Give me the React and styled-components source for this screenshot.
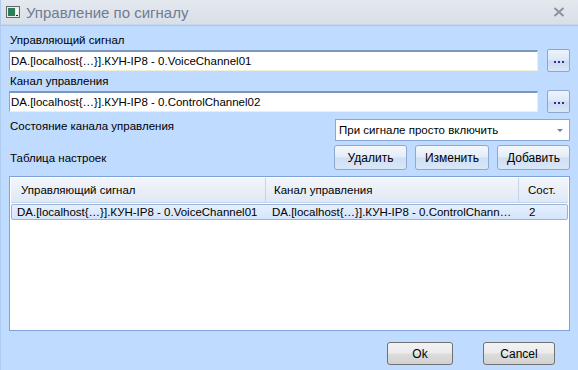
import React from 'react'
import styled, { createGlobalStyle } from 'styled-components'

const SIGNAL = 'DA.[localhost{…}].КУН-IP8 - 0.VoiceChannel01'
const CONTROL = 'DA.[localhost{…}].КУН-IP8 - 0.ControlChannel02'

const Global = createGlobalStyle`
  html, body { margin: 0; padding: 0; }
  body {
    width: 578px;
    height: 370px;
    overflow: hidden;
    font-family: "Liberation Sans", Arial, sans-serif;
    font-size: 11px;
    color: #000;
  }
`

const Window = styled.div`
  width: 578px;
  height: 370px;
  display: flex;
  flex-direction: column;
  background: #bfdbff;
  box-sizing: border-box;
  border-left: 1px solid #aecbf0;
`

const TitleBar = styled.div`
  height: 24px;
  display: flex;
  align-items: center;
  padding: 0 5px;
  background: linear-gradient(#e4e8ef, #d9dfe8);
  border-bottom: 1px solid #c9d7ea;
  box-shadow: 0 1px 0 #a9c6ee;
`

const Title = styled.div`
  flex: 1;
  margin-left: 6px;
  font-size: 15px;
  color: #6f7c90;
`

const Body = styled.div`
  flex: 1;
  display: flex;
  flex-direction: column;
  padding: 7px 8px 0 8px;
`

const Label = styled.div`
  height: 16px;
  line-height: 16px;
  padding-left: 1px;
  font-size: 11.5px;
  margin-top: ${p => p.$mt || 0}px;
`

const FieldRow = styled.div`
  display: grid;
  grid-template-columns: 1fr 23px;
  gap: 9px;
  align-items: center;
  margin-top: ${p => p.$mt || 0}px;
`

const Input = styled.div`
  height: 21px;
  box-sizing: border-box;
  background: #fff;
  border: 1px solid;
  border-top-width: 2px;
  border-color: #7c97bd #f3eedc #f3eedc #8ea7c8;
  line-height: 18px;
  padding-left: 1px;
  font-size: 11.5px;
  white-space: nowrap;
  overflow: hidden;
`

const DotsButton = styled.div`
  height: 23px;
  box-sizing: border-box;
  border: 1px solid #8ba7ce;
  border-radius: 2px;
  background: linear-gradient(#edf3fc 0%, #dde8f7 45%, #c9daf2 55%, #d9e6f7 100%);
  display: flex;
  align-items: center;
  justify-content: center;
  padding-top: 3px;
  gap: 2px;
`

const Dot = styled.span`
  width: 2px;
  height: 2px;
  background: #3a2c8c;
`

const SplitRow = styled.div`
  display: flex;
  align-items: ${p => p.$align || 'center'};
  margin-top: ${p => p.$mt || 0}px;
`

const Grow = styled.div`
  flex: 1;
  padding-left: 1px;
  line-height: 16px;
  font-size: 11.5px;
  margin-top: ${p => p.$mt || 0}px;
`

const Select = styled.div`
  width: 235px;
  height: 22px;
  box-sizing: border-box;
  background: #fff;
  border: 1px solid #86a8da;
  display: flex;
  align-items: center;
  padding-left: 3px;
  font-size: 11.5px;
`

const SelectText = styled.div`
  flex: 1;
`

const Arrow = styled.div`
  width: 0;
  height: 0;
  margin-right: 6px;
  border-left: 3px solid transparent;
  border-right: 3px solid transparent;
  border-top: 3px solid #6c7f99;
`

const Buttons = styled.div`
  display: flex;
  gap: 8px;
`

const BlueButton = styled.div`
  width: ${p => p.$w}px;
  height: 25px;
  box-sizing: border-box;
  border: 1px solid #8fa9cc;
  border-radius: 3px;
  background: linear-gradient(#f4f8fc 0%, #e3ecf7 48%, #cfdff3 52%, #d9e7f8 100%);
  display: flex;
  align-items: center;
  justify-content: center;
  font-size: 12px;
`

const Table = styled.div`
  margin-top: 6px;
  height: 155px;
  box-sizing: border-box;
  background: #fff;
  border: 1px solid #7ea3d9;
  padding: 1px;
`

const HeaderRow = styled.div`
  display: grid;
  grid-template-columns: 255px 253px 1fr;
  height: 24px;
  background: linear-gradient(#f3f6fb, #dfe8f5);
  border-bottom: 1px solid #c2d3ea;
`

const HeaderCell = styled.div`
  display: flex;
  align-items: center;
  padding-left: ${p => p.$pl || 10}px;
  font-size: 11.5px;
  border-right: 1px solid #c5d4e8;
  &:last-child { border-right: none; }
`

const DataRow = styled.div`
  display: grid;
  grid-template-columns: 255px 253px 1fr;
  height: 16px;
  margin-top: 1px;
  box-sizing: border-box;
  background: linear-gradient(#e6f0fd, #d4e4fa);
  border: 1px solid #97b4dd;
  border-radius: 2px;
`

const Cell = styled.div`
  padding: 0 4px 0 ${p => p.$pl || 5}px;
  line-height: 14px;
  font-size: 11.5px;
  white-space: nowrap;
  overflow: hidden;
  text-overflow: ellipsis;
`

const Footer = styled.div`
  display: flex;
  justify-content: flex-end;
  gap: 30px;
  padding: 11px 15px 0 0;
`

const GrayButton = styled.div`
  width: ${p => p.$w}px;
  height: 23px;
  box-sizing: border-box;
  border: 1px solid #717171;
  border-radius: 3px;
  background: linear-gradient(#f3f3f3 0%, #ebebeb 48%, #dcdcdc 52%, #d2d2d2 100%);
  display: flex;
  align-items: center;
  justify-content: center;
  font-size: 12px;
`

const CloseSlot = styled.div`
  width: 12px;
  margin-right: 8px;
  display: flex;
`

const WindowIcon = () => (
  <svg width="14" height="13" viewBox="0 0 14 13">
    <rect x="0.5" y="0.5" width="13" height="11" fill="#e8eee8" stroke="#5d6a70" />
    <rect x="2" y="2" width="7" height="8" fill="#2f7d57" />
    <rect x="10" y="3" width="2" height="5" fill="#ffffff" />
    <rect x="10" y="9" width="2" height="1" fill="#2a2a2a" />
  </svg>
)

const CloseIcon = () => (
  <svg width="12" height="10" viewBox="0 0 12 10">
    <path d="M1.5 1 L10.5 9 M10.5 1 L1.5 9" stroke="#8893a3" strokeWidth="2" />
  </svg>
)

const Dots = () => (
  <DotsButton>
    <Dot />
    <Dot />
    <Dot />
  </DotsButton>
)

export default function App() {
  return (
    <Window>
      <Global />
      <TitleBar>
        <WindowIcon />
        <Title>Управление по сигналу</Title>
        <CloseSlot>
          <CloseIcon />
        </CloseSlot>
      </TitleBar>
      <Body>
        <Label>Управляющий сигнал</Label>
        <FieldRow $mt={1}>
          <Input>{SIGNAL}</Input>
          <Dots />
        </FieldRow>
        <Label $mt={1}>Канал управления</Label>
        <FieldRow $mt={1}>
          <Input>{CONTROL}</Input>
          <Dots />
        </FieldRow>
        <SplitRow $mt={6} $align="flex-start">
          <Grow $mt={-1}>Состояние канала управления</Grow>
          <Select>
            <SelectText>При сигнале просто включить</SelectText>
            <Arrow />
          </Select>
        </SplitRow>
        <SplitRow $mt={4}>
          <Grow>Таблица настроек</Grow>
          <Buttons>
            <BlueButton $w={73}>Удалить</BlueButton>
            <BlueButton $w={74}>Изменить</BlueButton>
            <BlueButton $w={73}>Добавить</BlueButton>
          </Buttons>
        </SplitRow>
        <Table>
          <HeaderRow>
            <HeaderCell $pl={10}>Управляющий сигнал</HeaderCell>
            <HeaderCell $pl={8}>Канал управления</HeaderCell>
            <HeaderCell $pl={9}>Сост.</HeaderCell>
          </HeaderRow>
          <DataRow>
            <Cell $pl={5}>{SIGNAL}</Cell>
            <Cell $pl={5}>{CONTROL}</Cell>
            <Cell $pl={9}>2</Cell>
          </DataRow>
        </Table>
        <Footer>
          <GrayButton $w={66}>Ok</GrayButton>
          <GrayButton $w={72}>Cancel</GrayButton>
        </Footer>
      </Body>
    </Window>
  )
}
